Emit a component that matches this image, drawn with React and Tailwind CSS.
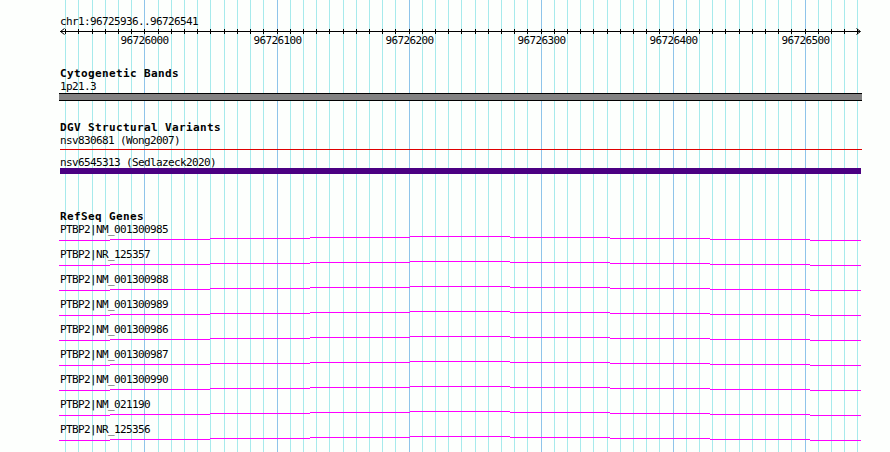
const START = 96725936
const SCALE = 800 / 606

// pixel column for a base position, same rounding as the track image
const px = (bp) => 60 + Math.floor(0.5 + (bp - START) * SCALE)

const ticks = []
for (let bp = 96725940; bp <= 96726540; bp += 10) ticks.push(bp)

const genes = [
  'PTBP2|NM_001300985',
  'PTBP2|NR_125357',
  'PTBP2|NM_001300988',
  'PTBP2|NM_001300989',
  'PTBP2|NM_001300986',
  'PTBP2|NM_001300987',
  'PTBP2|NM_001300990',
  'PTBP2|NM_021190',
  'PTBP2|NR_125356',
]

// the intron "hat": a shallow peak across the whole view
const hat = [
  [59, 110, 4],
  [110, 210, 3],
  [210, 310, 2],
  [310, 410, 1],
  [410, 510, 0],
  [510, 610, 1],
  [610, 710, 2],
  [710, 810, 3],
  [810, 861, 4],
]

const mono = 'font-["DejaVu_Sans_Mono",monospace]'

function Label({ children }) {
  return (
    <div className="h-[13px] whitespace-nowrap pl-[60px] text-[11px] leading-[13px] tracking-[-0.62px] text-black">
      {children}
    </div>
  )
}

function Title({ children, className = '' }) {
  return (
    <div
      className={`h-[13px] whitespace-nowrap pl-[60px] text-[11px] font-bold leading-[13px] tracking-[0.38px] text-black ${className}`}
    >
      {children}
    </div>
  )
}

function Grid() {
  return (
    <svg className="absolute inset-0" width="890" height="452" aria-hidden="true">
      {ticks.map((bp) => (
        <rect
          key={bp}
          x={px(bp)}
          y="0"
          width="1"
          height="452"
          fill={bp % 100 === 0 ? '#8ec4ea' : '#a6eaec'}
        />
      ))}
    </svg>
  )
}

function Ruler() {
  return (
    <svg className="block" width="890" height="20">
      <rect x="60" y="3" width="800" height="1" fill="#000" />
      {ticks.map((bp) => (
        <rect key={bp} x={px(bp)} y="1" width="1" height="5" fill="#000" />
      ))}
      <polyline points="64.5,0.5 60.5,3.5 64.5,6.5" fill="none" stroke="#000" strokeWidth="1" />
      <polyline points="856.5,0.5 860.5,3.5 856.5,6.5" fill="none" stroke="#000" strokeWidth="1" />
      {ticks
        .filter((bp) => bp % 100 === 0)
        .map((bp) => (
          <text
            key={bp}
            x={px(bp) + 0.5}
            y="16"
            textAnchor="middle"
            className="text-[11px] tracking-[-0.62px]"
            fill="#000"
          >
            {bp}
          </text>
        ))}
    </svg>
  )
}

function GeneRow({ name }) {
  return (
    <div className="h-[25px]">
      <Label>{name}</Label>
      <svg className="block" width="890" height="12">
        {hat.map(([a, b, y]) => (
          <rect key={a} x={a} y={y} width={b - a} height="1" fill="#ff00ff" />
        ))}
      </svg>
    </div>
  )
}

export default function App() {
  return (
    <div className={`relative h-[452px] w-[890px] overflow-hidden bg-[#fdfffd] ${mono}`}>
      <Grid />
      <div className="relative">
        <div className="mt-[15px]">
          <Label>chr1:96725936..96726541</Label>
        </div>
        <Ruler />

        <Title className="mt-[19px]">Cytogenetic Bands</Title>
        <Label>1p21.3</Label>
        <div className="ml-[59px] h-[8px] w-[803px] border-y border-black bg-[#828282]" />

        <Title className="mt-[20px]">DGV Structural Variants</Title>
        <Label>nsv830681 (Wong2007)</Label>
        <div className="ml-[60px] mt-[2px] h-px w-[802px] bg-[#e00000]" />
        <div className="mt-[6px]">
          <Label>nsv6545313 (Sedlazeck2020)</Label>
        </div>
        <div className="-mt-px ml-[60px] h-[6px] w-[801px] bg-[#4b0082]" />

        <Title className="mt-[36px]">RefSeq Genes</Title>
        {genes.map((g) => (
          <GeneRow key={g} name={g} />
        ))}
      </div>
    </div>
  )
}
